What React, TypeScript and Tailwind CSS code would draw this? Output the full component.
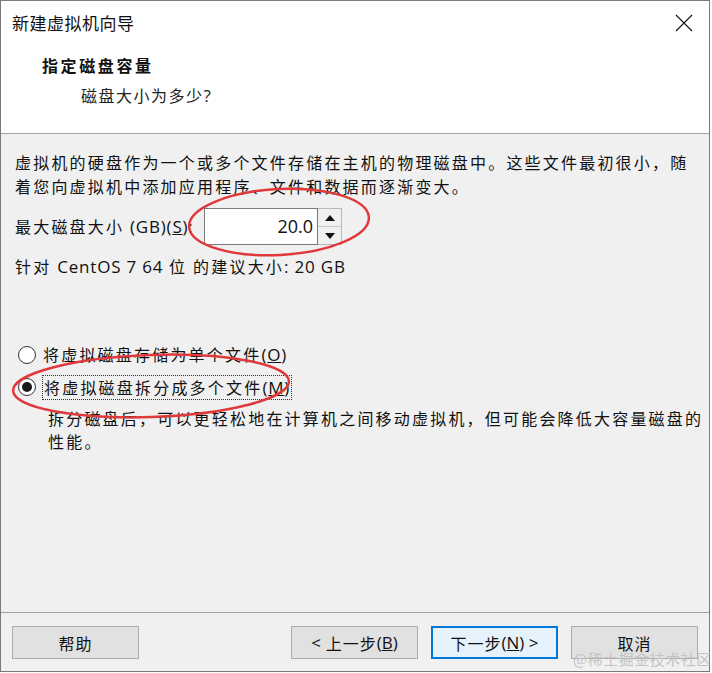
import React from "react";

const cjk = { fontFamily: '"Noto Sans CJK SC", "Noto Sans", sans-serif' };
const lat = { fontFamily: '"Open Sans", "Noto Sans", sans-serif' };

function L({ children, cls = "" }: { children: React.ReactNode; cls?: string }) {
  return (
    <span className={"text-[17px] tracking-[0.8px] " + cls} style={lat}>
      {children}
    </span>
  );
}

function Radio({ checked }: { checked?: boolean }) {
  return (
    <span className="w-[18px] h-[18px] rounded-full border border-[#333] bg-white flex items-center justify-center shrink-0">
      {checked && <span className="w-[10px] h-[10px] rounded-full bg-[#1a1a1a]" />}
    </span>
  );
}

function Btn({ children, primary }: { children: React.ReactNode; primary?: boolean }) {
  return (
    <button
      className={
        "w-[127px] h-[33px] flex items-center justify-center text-[16px] tracking-[1px] text-[#111] " +
        (primary ? "border-2 border-[#0078d7] bg-[#e5f1fb]" : "border border-[#adadad] bg-[#e1e1e1]")
      }
      style={cjk}
    >
      {children}
    </button>
  );
}

export default function App() {
  return (
    <div className="w-[712px] h-[673px] bg-white relative overflow-hidden" style={cjk}>
      <div className="w-[710px] h-[672px] border border-[#7a7a7a] flex flex-col">
        {/* title + header */}
        <div className="bg-white h-[132px] flex flex-col">
          <div className="h-[44px] flex items-center justify-between pl-[11px] pr-[16px]">
            <span className="text-[17px] text-[#111] tracking-[0.5px]">新建虚拟机向导</span>
            <svg width="18" height="18" viewBox="0 0 18 18">
              <path d="M1 1 L17 17 M17 1 L1 17" stroke="#111" strokeWidth="1.1" />
            </svg>
          </div>
          <div className="pl-[41px] pt-[11px]">
            <div
              className="text-[16px] font-bold tracking-[2.6px] text-[#111] leading-[22px]"
              style={{ fontFamily: '"Liberation Serif", "Noto Sans CJK SC", serif' }}
            >
              指定磁盘容量
            </div>
            <div className="pl-[39px] pt-[6px] text-[16px] tracking-[1.5px] text-[#222] leading-[22px]">
              磁盘大小为多少<L>?</L>
            </div>
          </div>
        </div>
        <div className="h-[1px] bg-[#a0a0a0]" />
        {/* body */}
        <div className="flex-1 bg-[#f0f0f0] flex flex-col pl-[14px] pt-[16px] text-[16px] text-[#111] tracking-[2.2px]">
          <div className="leading-[24px] whitespace-nowrap">
            <div>虚拟机的硬盘作为一个或多个文件存储在主机的物理磁盘中。这些文件最初很小，随</div>
            <div>着您向虚拟机中添加应用程序、文件和数据而逐渐变大。</div>
          </div>
          <div className="flex items-center mt-[10px] h-[37px]">
            <span className="w-[189px] whitespace-nowrap">
              最大磁盘大小 <L>(GB)(<span className="underline">S</span>):</L>
            </span>
            <div className="w-[114px] h-[37px] bg-white border border-[#7a7a7a] flex items-center justify-end pr-[4px] text-[18px] tracking-[0px]" style={lat}>
              20.0
            </div>
            <div className="w-[24px] h-[37px] flex flex-col border border-l-0 border-[#b8b8b8] bg-[#f0f0f0]">
              <div className="flex-1 flex items-center justify-center border-b border-[#c8c8c8]">
                <svg width="10" height="6" viewBox="0 0 10 6"><path d="M0 6 L5 0 L10 6 Z" fill="#111" /></svg>
              </div>
              <div className="flex-1 flex items-center justify-center">
                <svg width="10" height="6" viewBox="0 0 10 6"><path d="M0 0 L5 6 L10 0 Z" fill="#111" /></svg>
              </div>
            </div>
          </div>
          <div className="mt-[9px] leading-[24px] whitespace-nowrap">
            针对 <L>CentOS 7 64</L> 位 的建议大小<L>: 20 GB</L>
          </div>
          <div className="mt-[63px] flex items-center gap-[7px] pl-[3px] h-[26px]">
            <Radio />
            <span className="whitespace-nowrap">
              将虚拟磁盘存储为单个文件<L>(<span className="underline">O</span>)</L>
            </span>
          </div>
          <div className="mt-[6px] flex items-center gap-[6px] pl-[3px] h-[26px]">
            <Radio checked />
            <span className="whitespace-nowrap border border-dotted border-[#333] px-[1px] leading-[22px]">
              将虚拟磁盘拆分成多个文件<L>(<span className="underline">M</span>)</L>
            </span>
          </div>
          <div className="pl-[33px] mt-[7px] leading-[23px] whitespace-nowrap">
            <div>拆分磁盘后，可以更轻松地在计算机之间移动虚拟机，但可能会降低大容量磁盘的</div>
            <div>性能。</div>
          </div>
        </div>
        <div className="h-[1px] bg-[#a0a0a0]" />
        {/* footer */}
        <div className="h-[58px] bg-[#f0f0f0] flex items-start pt-[13px] pl-[11px] pr-[11px]">
          <Btn>帮助</Btn>
          <div className="flex-1" />
          <div className="flex gap-[13px]">
            <Btn><L cls="tracking-[0px]">&lt;</L>&nbsp;上一步<L cls="tracking-[0px]">(<span className="underline">B</span>)</L></Btn>
            <Btn primary>下一步<L cls="tracking-[0px]">(<span className="underline">N</span>) &gt;</L></Btn>
            <Btn>取消</Btn>
          </div>
        </div>
      </div>

      {/* annotation ellipses */}
      <svg className="absolute left-0 top-0 pointer-events-none" width="712" height="673">
        <ellipse cx="279" cy="222" rx="90" ry="33" fill="none" stroke="#e0393b" strokeWidth="2.5" transform="rotate(-3 279 222)" />
        <ellipse cx="151" cy="386" rx="138" ry="31" fill="none" stroke="#e0393b" strokeWidth="2.5" transform="rotate(-2 151 386)" />
      </svg>
      {/* watermark */}
      <div className="absolute left-[573px] top-[649px] text-[15px] leading-[20px] text-[#c4c4c4] whitespace-nowrap tracking-[0.5px]">
        @稀土掘金技术社区
      </div>
    </div>
  );
}
